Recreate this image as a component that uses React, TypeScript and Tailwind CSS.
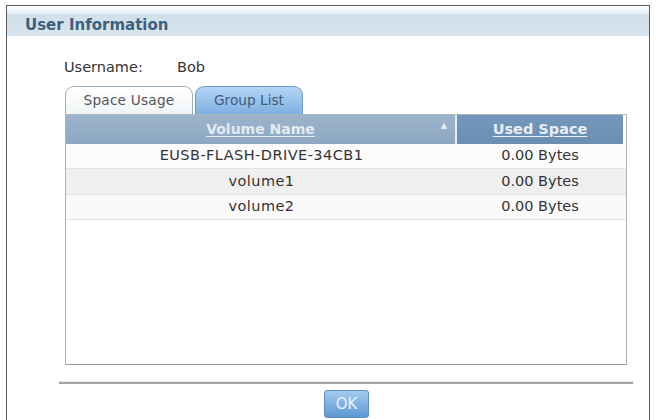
import React from "react";

const font = { fontFamily: '"DejaVu Sans", Verdana, sans-serif' };

const rows = [
  { name: "EUSB-FLASH-DRIVE-34CB1", used: "0.00 Bytes", bg: "bg-[#fbfbfb]" },
  { name: "volume1", used: "0.00 Bytes", bg: "bg-[#efefef]" },
  { name: "volume2", used: "0.00 Bytes", bg: "bg-[#f9f9f9]" },
];

export default function App() {
  return (
    <div
      className="w-[656px] h-[420px] bg-white overflow-hidden pt-[5px] pl-[6px]"
      style={font}
    >
      <div className="w-[644px] h-[420px] border border-[#5a5a5a] bg-white flex flex-col">
        <div className="h-[8px] bg-gradient-to-b from-white to-[#e4edf3]" />
        <div className="h-[22px] bg-gradient-to-b from-[#d0dfea] to-[#d8e5ee] flex items-center pl-[18px]">
          <span className="text-[15px] font-bold text-[#3f5f7e] leading-none">
            User Information
          </span>
        </div>

        <div className="mt-[22px] h-[20px] flex items-center ml-[57px] text-[14.5px] text-[#333]">
          <span className="w-[113px]">Username:</span>
          <span>Bob</span>
        </div>

        <div className="mt-[8px] ml-[58px] h-[28px] flex items-end gap-[2px]">
          <div className="w-[128px] h-[28px] rounded-t-[9px] border border-b-0 border-[#9fb1bf] bg-gradient-to-b from-white to-[#f1f4f6] flex items-center justify-center text-[13.7px] text-[#555] tracking-[0.2px]">
            Space Usage
          </div>
          <div className="w-[108px] h-[28px] rounded-t-[9px] border border-b-0 border-[#6d9ccc] bg-gradient-to-b from-[#b5d5f3] to-[#7eb0e2] flex items-center justify-center text-[13.7px] text-[#3d5c7c]">
            Group List
          </div>
        </div>

        <div className="ml-[58px] w-[562px] h-[251px] border border-[#a7b8bb] border-b-[#8f9c9e] bg-white flex flex-col">
          <div className="h-[29px] flex">
            <div className="w-[389px] bg-gradient-to-b from-[#9cb3cb] to-[#8ea8c3] flex items-center justify-center relative">
              <span className="text-[14px] font-bold text-[#e3ebf2] underline underline-offset-2">
                Volume Name
              </span>
              <span className="absolute right-[8px] top-[7px] text-[8px] text-[#e8eef4] leading-none">
                ▲
              </span>
            </div>
            <div className="w-[2px] bg-[#e6edf3]" />
            <div className="w-[166px] bg-gradient-to-b from-[#7497bb] to-[#6a8db2] flex items-center justify-center">
              <span className="text-[14.5px] font-bold text-[#e6eef5] underline underline-offset-2">
                Used Space
              </span>
            </div>
            <div className="w-[3px] bg-white" />
          </div>
          {rows.map((r) => (
            <div
              key={r.name}
              className={`h-[25.3px] flex border-b border-[#e2e2e2] text-[14.5px] text-[#333] ${r.bg}`}
            >
              <div className="w-[391px] flex items-center justify-center tracking-[0.45px]">
                {r.name}
              </div>
              <div className="w-[166px] flex items-center justify-center">
                {r.used}
              </div>
            </div>
          ))}
        </div>

        <div className="mt-[16px] ml-[52px] w-[574px] border-t border-dotted border-[#d0d0d0]" />
        <div className="ml-[52px] w-[574px] h-[2px] bg-[#a5a5a5]" />

        <div className="mt-[6px] ml-[317px] w-[45px] h-[28px] rounded-[3px] border border-[#5d8fc0] bg-gradient-to-b from-[#a3cbef] to-[#5d98d2] flex items-center justify-center text-[15px] text-[#eaf3fb]">
          OK
        </div>
      </div>
    </div>
  );
}
